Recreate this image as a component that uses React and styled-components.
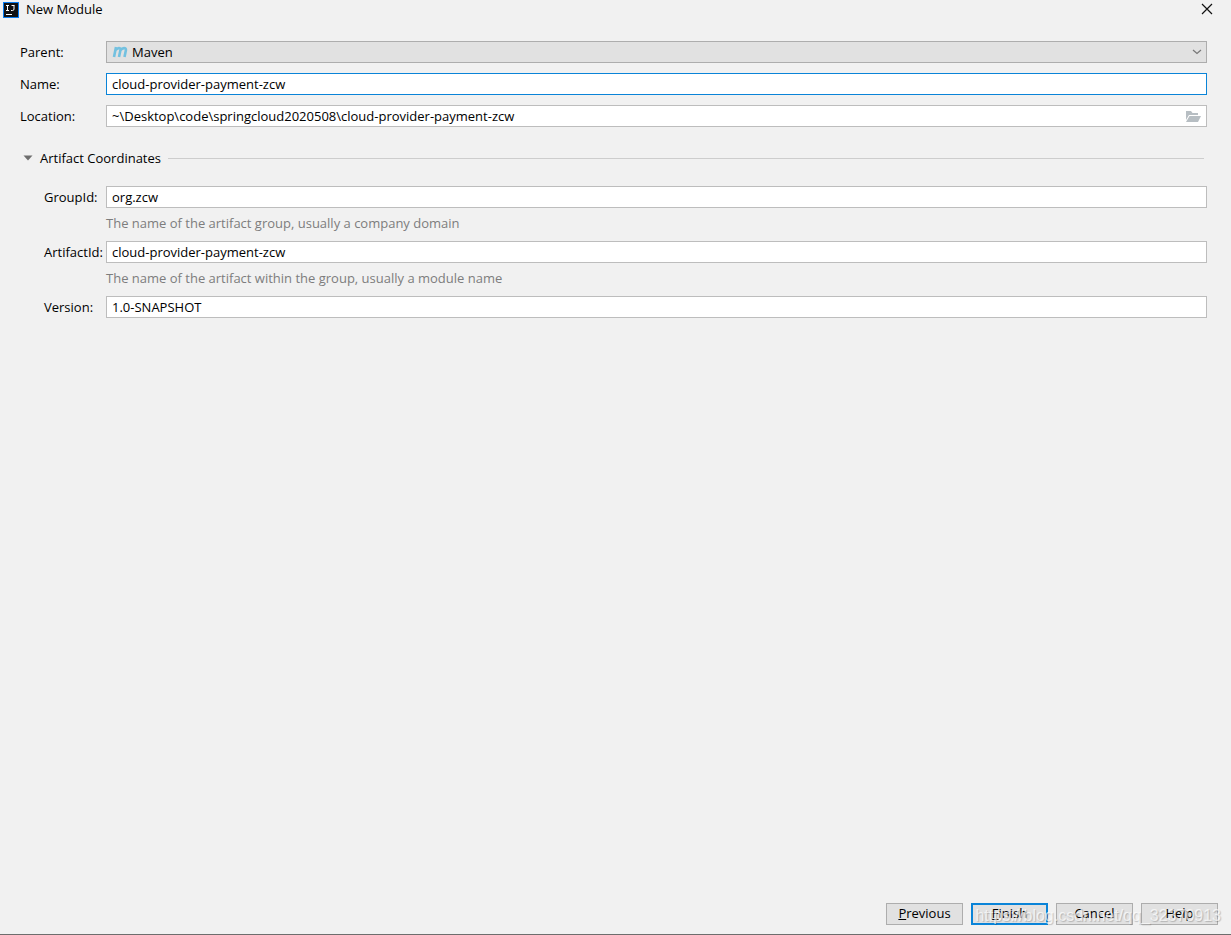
import { useState } from 'react';
import styled, { createGlobalStyle } from 'styled-components';

const GlobalStyle = createGlobalStyle`
  * {
    box-sizing: border-box;
  }

  body {
    margin: 0;
    background: #f1f1f1;
  }

  body, input, select, button {
    color: #000;
    font-family: 'Open Sans', 'Noto Sans', sans-serif;
    font-size: 13px;
    line-height: 20px;
  }
`;

const Dialog = styled.div`
  display: flex;
  flex-direction: column;
  min-height: 100vh;
  border-bottom: 1px solid #6d6d6d;
`;

const TitleBar = styled.header`
  display: flex;
  align-items: center;
  gap: 7px;
  height: 18px;
  padding: 0 18px 0 3px;
`;

const Logo = styled.svg`
  align-self: flex-end;
`;

const Title = styled.h1`
  flex: 1;
  margin: 0;
  font-size: 13px;
  font-weight: normal;
`;

const IconButton = styled.button`
  display: flex;
  padding: 0;
  border: 0;
  background: none;
`;

const Form = styled.form`
  display: flex;
  flex: 1;
  flex-direction: column;
`;

const Fields = styled.div`
  display: flex;
  flex-direction: column;
  gap: 10px;
  padding: 23px 24px 0 20px;
`;

const Row = styled.div`
  display: grid;
  grid-template-columns: ${({ $nested }) => ($nested ? '62px' : '86px')} 1fr;
  align-items: center;
`;

const Label = styled.label`
  white-space: nowrap;
`;

const Input = styled.input`
  width: 100%;
  height: 22px;
  padding: 0 5px 1px;
  border: 1px solid ${({ $active }) => ($active ? '#0a84d8' : '#bdbdbd')};
  background: #fff;
  outline: none;
`;

const FieldBox = styled.div`
  display: flex;
  align-items: center;
  height: 22px;
  border: 1px solid ${({ $filled }) => ($filled ? '#adadad' : '#bdbdbd')};
  background: ${({ $filled }) => ($filled ? '#e1e1e1' : '#fff')};
  padding: ${({ $filled }) => ($filled ? '0 4px 0 5px' : '0 5px')};
`;

const BareInput = styled.input`
  flex: 1;
  min-width: 0;
  height: 20px;
  padding: 0 0 1px;
  border: 0;
  background: none;
  outline: none;
`;

const Select = styled.select`
  flex: 1;
  height: 20px;
  padding: 0 0 0 4px;
  border: 0;
  background: none;
  appearance: none;
  outline: none;
`;

const SectionToggle = styled.button`
  display: flex;
  align-items: center;
  gap: 7px;
  height: 20px;
  margin: 21px 27px 0 23px;
  padding: 0;
  border: 0;
  background: none;

  &::after {
    flex: 1;
    height: 1px;
    background: #cdcdcd;
    content: '';
  }
`;

const Coordinates = styled.div`
  padding: 18px 24px 0 44px;
`;

const Hint = styled.p`
  margin: 0;
  padding: 5px 0 8px 62px;
  color: #7d7d7d;
`;

const Footer = styled.footer`
  display: flex;
  justify-content: flex-end;
  gap: 8px;
  margin-top: auto;
  padding: 0 13px 9px;
`;

const Button = styled.button`
  width: 77px;
  height: 22px;
  padding: 0 0 2px;
  border: ${({ $primary }) => ($primary ? '2px solid #0a84d8' : '1px solid #adadad')};
  background: #e1e1e1;
  line-height: 16px;
`;

const Watermark = styled.div`
  position: absolute;
  right: 10px;
  bottom: 9px;
  color: rgba(255, 255, 255, 0.7);
  font-family: 'Liberation Sans', sans-serif;
  font-size: 16px;
  line-height: 20px;
  text-shadow: 1px 1px 1px rgba(0, 0, 0, 0.2);
  pointer-events: none;
`;

function IdeaLogo() {
  return (
    <Logo width='16' height='16' viewBox='0 0 16 16' aria-hidden='true'>
      <rect width='16' height='16' fill='#087cf0' />
      <rect x='1' y='1' width='14' height='14' fill='#111' />
      <path d='M3 3.5h3M4.5 3.5v5M3 8.5h3M8.5 3.5h3M11 3.5V7q0 1.5-1.5 1.5H8M3 12.5h6' fill='none' stroke='#fff' />
    </Logo>
  );
}

function CloseIcon() {
  return (
    <svg width='12' height='12' viewBox='0 0 12 12' aria-hidden='true'>
      <path d='M1 1l10 10M11 1L1 11' stroke='#111' strokeWidth='1.2' />
    </svg>
  );
}

function MavenIcon() {
  return (
    <svg width='16' height='16' viewBox='0 0 16 16' aria-hidden='true'>
      <path
        d='M2 13L4 3M3.4 6.2Q5 4.1 6.8 4.1Q8.8 4.1 8.4 6.2L7 13M8.2 6.5Q10 4.1 12 4.1Q14.3 4.1 13.9 6.2L12.5 13'
        fill='none'
        stroke='#73c1e0'
        strokeWidth='2.6'
      />
    </svg>
  );
}

function ChevronIcon() {
  return (
    <svg width='10' height='6' viewBox='0 0 10 6' aria-hidden='true'>
      <path d='M1 1l4 3.5L9 1' fill='none' stroke='#777' strokeWidth='1.2' />
    </svg>
  );
}

function FolderIcon() {
  return (
    <svg width='16' height='12' viewBox='0 0 16 12' aria-hidden='true'>
      <path d='M1 10V1h5l1.5 2H13v2H4z' fill='#b7bec3' />
      <path d='M4.5 6H16l-3 6H1z' fill='#b7bec3' />
    </svg>
  );
}

function TriangleIcon() {
  return (
    <svg width='10' height='6' viewBox='0 0 10 6' aria-hidden='true'>
      <path d='M0.5 0.5h9L5 5.5z' fill='#6e6e6e' />
    </svg>
  );
}

function App() {
  const [name, setName] = useState('cloud-provider-payment-zcw');
  const [location, setLocation] = useState('~\\Desktop\\code\\springcloud2020508\\cloud-provider-payment-zcw');
  const [groupId, setGroupId] = useState('org.zcw');
  const [artifactId, setArtifactId] = useState('cloud-provider-payment-zcw');
  const [version, setVersion] = useState('1.0-SNAPSHOT');
  const [open, setOpen] = useState(true);

  return (
    <Dialog>
      <GlobalStyle />
      <TitleBar>
        <IdeaLogo />
        <Title>New Module</Title>
        <IconButton type='button' aria-label='Close'>
          <CloseIcon />
        </IconButton>
      </TitleBar>
      <Form onSubmit={(e) => e.preventDefault()}>
        <Fields>
          <Row>
            <Label htmlFor='parent'>Parent:</Label>
            <FieldBox $filled>
              <MavenIcon />
              <Select id='parent'>
                <option>Maven</option>
              </Select>
              <ChevronIcon />
            </FieldBox>
          </Row>
          <Row>
            <Label htmlFor='name'>Name:</Label>
            <Input id='name' $active value={name} onChange={(e) => setName(e.target.value)} />
          </Row>
          <Row>
            <Label htmlFor='location'>Location:</Label>
            <FieldBox>
              <BareInput id='location' value={location} onChange={(e) => setLocation(e.target.value)} />
              <IconButton type='button' aria-label='Browse'>
                <FolderIcon />
              </IconButton>
            </FieldBox>
          </Row>
        </Fields>
        <SectionToggle type='button' aria-expanded={open} onClick={() => setOpen(!open)}>
          <TriangleIcon />
          Artifact Coordinates
        </SectionToggle>
        {open && (
          <Coordinates>
            <Row $nested>
              <Label htmlFor='groupId'>GroupId:</Label>
              <Input id='groupId' value={groupId} onChange={(e) => setGroupId(e.target.value)} />
            </Row>
            <Hint>The name of the artifact group, usually a company domain</Hint>
            <Row $nested>
              <Label htmlFor='artifactId'>ArtifactId:</Label>
              <Input id='artifactId' value={artifactId} onChange={(e) => setArtifactId(e.target.value)} />
            </Row>
            <Hint>The name of the artifact within the group, usually a module name</Hint>
            <Row $nested>
              <Label htmlFor='version'>Version:</Label>
              <Input id='version' value={version} onChange={(e) => setVersion(e.target.value)} />
            </Row>
          </Coordinates>
        )}
        <Footer>
          <Button type='button'>
            <u>P</u>revious
          </Button>
          <Button type='submit' $primary>
            <u>F</u>inish
          </Button>
          <Button type='button'>Cancel</Button>
          <Button type='button'>Help</Button>
        </Footer>
      </Form>
      <Watermark>https://blog.csdn.net/qq_32370913</Watermark>
    </Dialog>
  );
}

export default App;
